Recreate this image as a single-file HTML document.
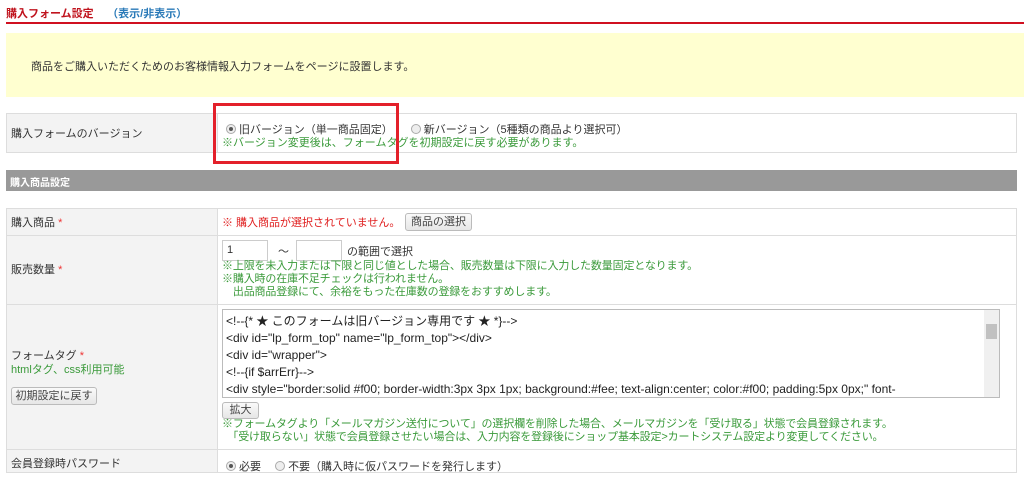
<!DOCTYPE html><html><head><meta charset="utf-8"><style>
*{margin:0;padding:0;box-sizing:border-box}
body{width:1024px;height:483px;background:#fff;font-family:"Liberation Sans","Noto Sans CJK JP",sans-serif;font-size:11px;color:#333;position:relative;overflow:hidden}
.a{position:absolute;white-space:nowrap}
.g{color:#3a9a3a}
.row{position:absolute;left:6px;width:1011px;border:1px solid #ddd;background:#fff}
.lab{position:absolute;left:0;top:0;bottom:0;width:211px;background:#f3f3f3;border-right:1px solid #ddd}
.rd{display:inline-block;width:10px;height:10px;border:1px solid #aaa;border-radius:50%;background:#eee;vertical-align:-1px;margin-right:3px;position:relative}
.rd.on::after{content:"";position:absolute;left:2px;top:2px;width:4px;height:4px;border-radius:50%;background:#555}
.btn{position:absolute;border:1px solid #bbb;border-radius:3px;background:linear-gradient(#fafafa,#e6e6e6);font-size:11px;text-align:center;color:#444}
.req{color:#e33}
</style></head><body>
<div class="a" style="left:6px;top:5px;font-size:11px;font-weight:bold;color:#c0141e">購入フォーム設定　<span style="color:#2a7ab8;margin-left:8px">（表示/非表示）</span></div>
<div class="a" style="left:6px;top:22px;width:1018px;height:2px;background:#d01020"></div>
<div class="a" style="left:6px;top:33px;width:1018px;height:64px;background:#ffffd0"></div>
<div class="a" style="left:31px;top:58px;font-size:11px">商品をご購入いただくためのお客様情報入力フォームをページに設置します。</div>

<div class="row" style="top:113px;height:40px"><div class="lab"></div></div>
<div class="a" style="left:11px;top:125px">購入フォームのバージョン</div>
<div class="a" style="left:226px;top:121px;font-size:11px"><span class="rd on"></span>旧バージョン（単一商品固定）<span style="display:inline-block;width:18px"></span><span class="rd"></span>新バージョン（5種類の商品より選択可）</div>
<div class="a g" style="left:222px;top:134px;font-size:11px">※バージョン変更後は、フォームタグを初期設定に戻す必要があります。</div>
<div class="a" style="left:213px;top:103px;width:186px;height:61px;border:3px solid #e3202a"></div>

<div class="a" style="left:6px;top:170px;width:1011px;height:21px;background:#999"></div>
<div class="a" style="left:10px;top:174px;font-size:10px;font-weight:bold;color:#fff">購入商品設定</div>

<div class="row" style="top:208px;height:265px"><div class="lab"></div></div>
<div class="a" style="left:6px;top:235px;width:1011px;height:1px;background:#ddd"></div>
<div class="a" style="left:6px;top:304px;width:1011px;height:1px;background:#ddd"></div>
<div class="a" style="left:6px;top:449px;width:1011px;height:1px;background:#ddd"></div>

<div class="a" style="left:11px;top:214px">購入商品 <span class="req">*</span></div>
<div class="a" style="left:222px;top:214px;color:#e02020;font-size:11px">※ 購入商品が選択されていません。</div>
<div class="btn" style="left:405px;top:213px;width:67px;height:18px;line-height:16px">商品の選択</div>

<div class="a" style="left:11px;top:261px">販売数量 <span class="req">*</span></div>
<div class="a" style="left:222px;top:240px;width:46px;height:21px;border:1px solid #ccc;padding:3px 4px">1</div>
<div class="a" style="left:278px;top:243px">～</div>
<div class="a" style="left:296px;top:240px;width:46px;height:21px;border:1px solid #ccc"></div>
<div class="a" style="left:347px;top:243px">の範囲で選択</div>
<div class="a g" style="left:222px;top:260px;font-size:11px;line-height:13px;letter-spacing:-0.15px">※上限を未入力または下限と同じ値とした場合、販売数量は下限に入力した数量固定となります。<br>※購入時の在庫不足チェックは行われません。<br>　出品商品登録にて、余裕をもった在庫数の登録をおすすめします。</div>

<div class="a" style="left:11px;top:347px">フォームタグ <span class="req">*</span></div>
<div class="a g" style="left:11px;top:361px;font-size:11px">htmlタグ、css利用可能</div>
<div class="btn" style="left:11px;top:387px;width:86px;height:18px;line-height:16px">初期設定に戻す</div>
<div class="a" style="left:222px;top:309px;width:778px;height:89px;border:1px solid #bbb;font-size:12px;line-height:17px;padding:3px 3px;overflow:hidden;color:#222">&lt;!--{* ★ このフォームは旧バージョン専用です ★ *}--&gt;<br>&lt;div id="lp_form_top" name="lp_form_top"&gt;&lt;/div&gt;<br>&lt;div id="wrapper"&gt;<br>&lt;!--{if $arrErr}--&gt;<br>&lt;div style="border:solid #f00; border-width:3px 3px 1px; background:#fee; text-align:center; color:#f00; padding:5px 0px;" font-</div>
<div class="a" style="left:984px;top:310px;width:15px;height:87px;background:#f0f0f0"></div>
<div class="a" style="left:986px;top:324px;width:11px;height:15px;background:#c1c1c1"></div>
<div class="btn" style="left:222px;top:402px;width:37px;height:17px;line-height:15px">拡大</div>
<div class="a g" style="left:222px;top:418px;font-size:11px;line-height:13px;letter-spacing:-0.15px">※フォームタグより「メールマガジン送付について」の選択欄を削除した場合、メールマガジンを「受け取る」状態で会員登録されます。<br>　「受け取らない」状態で会員登録させたい場合は、入力内容を登録後にショップ基本設定&gt;カートシステム設定より変更してください。</div>

<div class="a" style="left:11px;top:455px">会員登録時パスワード</div>
<div class="a" style="left:226px;top:458px;font-size:11px"><span class="rd on"></span>必要　 <span class="rd"></span>不要（購入時に仮パスワードを発行します）</div>
</body></html>
